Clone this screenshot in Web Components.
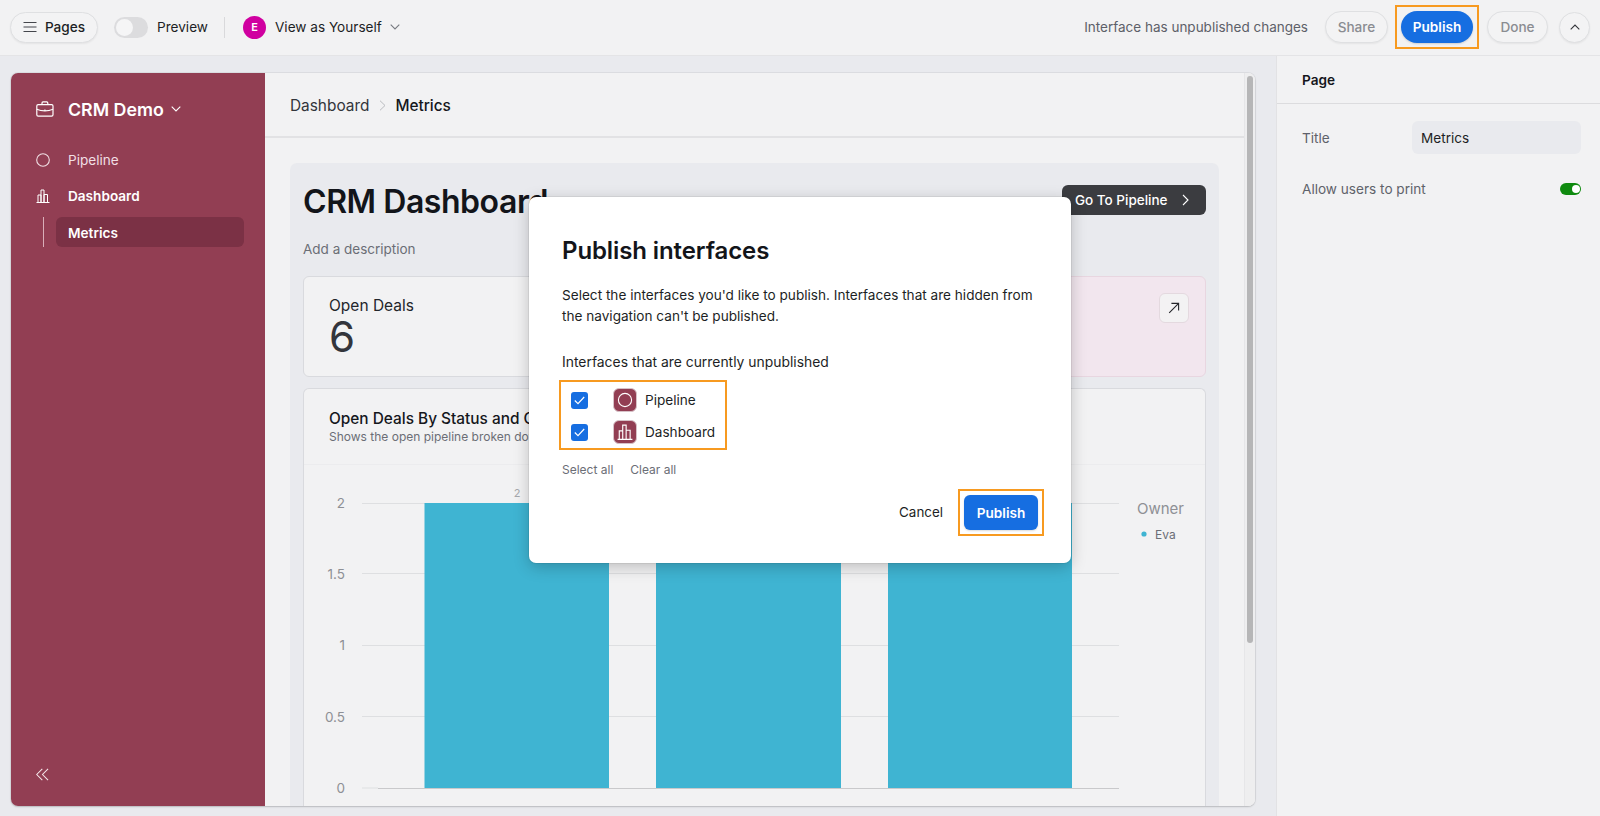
<!DOCTYPE html>
<html lang="en"><head><meta charset="utf-8"><title>CRM Demo</title>
<style>
html,body{margin:0;height:100%;overflow:hidden;background:#e9eaee;font-family:Inter,"Liberation Sans",sans-serif;color:#1d1f25;font-size:13.6px}
body{display:flex;flex-direction:column;height:816px;position:relative}
</style></head><body>
<crm-topbar></crm-topbar>
<crm-workspace></crm-workspace>
<publish-dialog></publish-dialog>
<script>
const define=(name,html)=>customElements.define(name,class extends HTMLElement{
  constructor(){super();this.attachShadow({mode:'open'}).innerHTML=html;}
});
const chevD=(w=10)=>`<svg width="${w}" height="6" viewBox="0 0 10 6" fill="none" stroke="currentColor" stroke-width="1.1"><path d="M.7.7 5 5 9.3.7"/></svg>`;

define('pill-button',`<style>
:host{display:inline-flex;align-items:center;justify-content:center;height:30px;box-sizing:border-box;border-radius:16px;border:1px solid #dfe0e2;background:#f3f3f4;color:#8a8c91;font-size:13.6px;font-weight:500;padding:0 12px;box-shadow:0 1px 2px rgba(0,0,0,.06)}
</style><slot></slot>`);

define('crm-topbar',`<style>
:host{display:flex;align-items:center;height:54px;padding:0 10px 1px 10px;flex:none;box-sizing:content-box;background:#f2f2f3;border-bottom:1px solid #e4e4e6;font-size:13.6px;color:#1d1f25}
.pages{width:88px;height:31px;color:#1d1f25;gap:8px;padding:0;margin-right:16px}
.pages svg{flex:none}
.toggle{width:34px;height:21px;border-radius:11px;background:#dcdcde;padding:2px;box-sizing:border-box;margin-right:9px}
.toggle i{display:block;width:17px;height:17px;border-radius:50%;background:#f5f5f6}
.div{width:1px;height:21px;background:#d9d9db;margin:0 18px 0 16px}
.avatar{width:23px;height:23px;border-radius:50%;background:#d000a0;color:#fff;font-size:11px;font-weight:600;display:flex;align-items:center;justify-content:center;margin-right:9px}
.caret{margin-left:8px;color:#777a80;display:flex}
.sp{flex:1}
.status{color:#5d6068;margin-right:17px;font-size:13.5px}
.hl{border:2px solid #f79a20;box-sizing:border-box;width:84px;height:44px;padding:0 4px;display:flex;align-items:center;margin:0 8px 0 7px}
.pub{flex:1;height:32px;border-radius:16px;background:#166ee1;color:#fff;font-weight:600;display:flex;align-items:center;justify-content:center;box-shadow:0 1px 2px rgba(0,0,0,.15)}
.up{width:31px;height:31px;padding:0;margin-left:11px;color:#33353a;border-radius:50%}
</style>
<pill-button class="pages"><svg width="14" height="12" viewBox="0 0 14 12" fill="none" stroke="#44464c" stroke-width="1.2"><path d="M.5 1.5h13M.5 6h13M.5 10.5h13"/></svg>Pages</pill-button>
<div class="toggle"><i></i></div><span>Preview</span><div class="div"></div>
<div class="avatar">E</div><span>View as Yourself</span><span class="caret">${chevD()}</span>
<div class="sp"></div>
<span class="status">Interface has unpublished changes</span>
<pill-button style="width:63px;height:32px;padding:0">Share</pill-button>
<div class="hl"><div class="pub">Publish</div></div>
<pill-button style="width:61px;height:32px;padding:0">Done</pill-button>
<pill-button class="up"><svg width="10" height="6" viewBox="0 0 10 6" fill="none" stroke="currentColor" stroke-width="1.1"><path d="M.7 5.3 5 1l4.3 4.3"/></svg></pill-button>`);

define('crm-workspace',`<style>
:host{display:flex;flex:1;min-height:0}
.left{flex:1;min-width:0;padding:17px 21px 10px 11px;display:flex}
crm-sidebar{flex:none}
.panel{flex:1;display:flex;border-radius:7px;overflow:hidden;box-shadow:0 0 0 1px rgba(0,0,0,.05),0 1px 2px rgba(0,0,0,.16)}
</style>
<div class="left"><div class="panel"><crm-sidebar></crm-sidebar><crm-page></crm-page></div></div>
<crm-props></crm-props>`);

define('crm-sidebar',`<style>
:host{display:flex;flex-direction:column;width:254px;background:#923e53;color:#fff;box-sizing:border-box;padding:19px 21px 0 25px;font-size:13.6px}
.brand{display:flex;align-items:center;height:34px;font-size:17.8px;font-weight:600;margin-bottom:19px}
.ico{width:32px;flex:none;display:flex}
.brand .car{margin-left:7px;display:flex}
.row{display:flex;align-items:center;height:30px;margin-bottom:6px;color:#f1dfe4}
.row.b{font-weight:600;color:#fff}
.sub{display:flex;align-items:stretch;height:30px}
.line{width:1px;background:#d9aeb9;margin:0 12px 0 7px}
.cur{flex:1;border-radius:6px;background:#7b3145;color:#fff;font-weight:600;display:flex;align-items:center;padding:1px 0 0 12px}
.sp{flex:1}
.col{height:38px;display:flex;color:#f6e8ec}
</style>
<div class="brand"><span class="ico"><svg width="18" height="16" viewBox="0 0 18 16" fill="none" stroke="#fff" stroke-width="1.2"><rect x=".8" y="3.6" width="16.2" height="11.6" rx="1.4"/><path d="M6 3.4V1.9c0-.6.4-1 1-1h3.8c.6 0 1 .4 1 1v1.5M.8 8.2c2.6 1.1 5.3 1.6 8.1 1.6s5.5-.5 8.1-1.6M8.9 8.6v1.8"/></svg></span>CRM Demo<span class="car">${chevD()}</span></div>
<div class="row"><span class="ico"><svg width="14" height="14" viewBox="0 0 14 14" fill="none" stroke="#f1dfe4" stroke-width="1.1"><circle cx="7" cy="7" r="6.3"/></svg></span>Pipeline</div>
<div class="row b"><span class="ico"><svg width="14" height="14" viewBox="0 0 14 14" fill="none" stroke="#fff" stroke-width="1"><path d="M.5 13.5h13M2 13.5V6h3v7.5M5 13.5V1h3v12.5M8 13.5V5.5h3.5v8"/></svg></span>Dashboard</div>
<div class="sub"><div class="line"></div><div class="cur">Metrics</div></div>
<div class="sp"></div>
<div class="col"><svg width="13" height="13" viewBox="0 0 14 14" fill="none" stroke="#f6e8ec" stroke-width="1.1"><path d="M6.8 1 .8 7l6 6M13 1 7 7l6 6"/></svg></div>`);

define('crm-page',`<style>
:host{display:flex;flex:1;min-width:0;flex-direction:column;background:#f2f2f3;position:relative}
header{height:61px;flex:none;padding-top:2px;border-bottom:2px solid #e2e2e4;display:flex;align-items:center;padding-left:25px;box-sizing:content-box;font-size:15.4px;color:#33353b}
header b{font-weight:500;color:#15171c}
header svg{margin:0 9px 0 10px}
.body{flex:1;display:flex;min-height:0}
.scroll{flex:1;min-width:0;padding:25px 25px 0 25px;display:flex}
.hold{position:absolute;right:0;top:0;bottom:0;width:11px;background:#eeeeef;border-left:1px solid #e6e6e8;box-sizing:border-box}
.thumb{position:absolute;left:2px;top:3px;width:6px;height:567px;border-radius:3px;background:#b6b6b7}
crm-dashboard{flex:1;min-width:0}
</style>
<div class="hold"><div class="thumb"></div></div>
<header><span>Dashboard</span><svg width="7" height="11" viewBox="0 0 7 11" fill="none" stroke="#b9bbbf" stroke-width="1"><path d="m1 .7 5 4.8-5 4.8"/></svg><b>Metrics</b></header>
<div class="body"><div class="scroll"><crm-dashboard></crm-dashboard></div><div style="width:11px"></div></div>`);

define('crm-dashboard',`<style>
:host{display:block;background:#e9eaee;border-radius:7px 7px 0 0;padding:22px 13px 0 13px;box-sizing:border-box;overflow:hidden}
.top{display:flex;align-items:flex-start;justify-content:space-between;height:30px}
h1{margin:2px 0 0;font-size:32px;font-weight:600;letter-spacing:-.45px;color:#13151a;line-height:30px}
.go{width:144px;height:30px;box-sizing:border-box;background:#3b3c40;color:#fff;border-radius:6px;display:flex;align-items:center;padding-left:13px;font-weight:500;font-size:13.5px;gap:14px}
.desc{margin:24px 0 17px;height:20px;line-height:20px;color:#6b6e76;font-size:13.5px}
.cards{display:grid;grid-template-columns:1fr 1fr;gap:11px;height:101px;margin-bottom:11px}
.card{border:1px solid #d9dade;border-radius:6px;background:#f2f2f3;box-sizing:border-box;padding:18px 25px}
.pink{background:#f2e6ee;border-color:#e8d6e0;display:flex;justify-content:flex-end;padding:16px 16px 0 0}
.ext{width:30px;height:30px;box-sizing:border-box;background:#f3f2f3;border:1px solid #e4d9df;border-radius:6px;display:flex;align-items:center;justify-content:center}
.lab{font-size:15.5px;line-height:22px;color:#23252b}
.num{font-size:42px;line-height:42px;color:#33353c;margin-top:-1px}
.chart{border:1px solid #d9dade;border-bottom:0;border-radius:6px 6px 0 0;background:#f2f2f3;height:420px;box-sizing:border-box}
.chead{height:76px;border-bottom:1px solid #ececee;padding:19px 25px 0;box-sizing:border-box}
.ct{font-size:15.4px;font-weight:500;line-height:21px;color:#15171c;white-space:nowrap}
.cs{font-size:12px;line-height:16px;color:#6b6e76;white-space:nowrap}
svg.c{display:block}
svg.c text{font-family:Inter,"Liberation Sans",sans-serif}
</style>
<div class="top"><h1>CRM Dashboard</h1><div class="go">Go To Pipeline<svg width="7" height="12" viewBox="0 0 7 12" fill="none" stroke="#fff" stroke-width="1.1"><path d="m1 1 5 5-5 5"/></svg></div></div>
<div class="desc">Add a description</div>
<div class="cards">
 <div class="card"><div class="lab">Open Deals</div><div class="num">6</div></div>
 <div class="card pink"><div class="ext"><svg width="12" height="12" viewBox="0 0 12 12" fill="none" stroke="#24262b" stroke-width="1.1"><path d="M1.2 10.8 10.6 1.4M3.4 1.4h7.2v7.2"/></svg></div></div>
</div>
<div class="chart">
 <div class="chead"><div class="ct">Open Deals By Status and Owner</div><div class="cs">Shows the open pipeline broken down</div></div>
 <svg class="c" width="901" height="342" viewBox="304 465 901 342">
  <g stroke="#dedfe1" stroke-width="1.2"><path d="M362 503.5H1119M362 573.5H1119M362 645.5H1119M362 716.5H1119M362 788H378"/></g>
  <path d="M378 788.5H1119" stroke="#c9c9cb" stroke-width="1.2"/>
  <g fill="#8e9095" font-size="13.5" text-anchor="end"><text x="345" y="508">2</text><text x="345" y="579">1.5</text><text x="345" y="650">1</text><text x="345" y="721.500">0.5</text><text x="345" y="793">0</text></g>
  <g fill="#3fb4d2"><rect x="424.500" y="503" width="184.500" height="285"/><rect x="656" y="503" width="185" height="285"/><rect x="888" y="503" width="184" height="285"/></g>
  <text x="517" y="497" font-size="11" fill="#a6a8ac" text-anchor="middle">2</text>
  <text x="1137" y="514" font-size="15" fill="#8e9095">Owner</text>
  <circle cx="1144" cy="534" r="2.600" fill="#3fb4d2"/><text x="1155" y="538.500" font-size="12" fill="#6b6e76">Eva</text>
 </svg>
</div>`);

define('crm-props',`<style>
:host{display:block;width:324px;flex:none;box-sizing:border-box;background:#f2f2f3;border-left:1px solid #e2e2e4;font-size:13.6px;color:#5f626a}
.h{height:47px;border-bottom:1px solid #dcdcde;display:flex;align-items:center;padding-left:25px;font-weight:600;color:#15171c}
.r{display:flex;align-items:center;justify-content:space-between;padding:0 19px 0 25px}
.inp{width:169px;height:33px;box-sizing:border-box;background:#e9eaee;border-radius:6px;padding-left:9px;display:flex;align-items:center;color:#1d1f25}
.tg{width:21px;height:12px;border-radius:6px;background:#0f8a0f;position:relative}
.tg i{position:absolute;right:1.500px;top:2px;width:8px;height:8px;border-radius:50%;background:#fff}
</style>
<div class="h">Page</div>
<div class="r" style="margin-top:17px"><span>Title</span><div class="inp">Metrics</div></div>
<div class="r" style="margin-top:25px;height:20px"><span>Allow users to print</span><div class="tg"><i></i></div></div>`);

define('publish-dialog',`<style>
:host{display:block;position:absolute;left:529px;top:197px;width:542px;height:366px;box-sizing:border-box;background:#fff;border-radius:7px;box-shadow:0 0 0 1px rgba(0,0,0,.06),0 4px 16px rgba(0,0,0,.22);padding:37px 33px 0;color:#1d1f25;font-size:13.6px}
h2{margin:0 0 17px;font-size:24px;line-height:34px;font-weight:600;color:#13151a;letter-spacing:-.1px}
p{margin:0 0 25px;line-height:21px;width:480px}
.sub{line-height:21px;color:#1d1f25;margin-bottom:7px;font-size:13.9px;font-weight:400}
.hl{width:168px;height:70px;box-sizing:border-box;border:2px solid #f79a20;margin-left:-3px;padding:2px 0 0 10px}
.it{display:flex;align-items:center;height:32px}
.cb{width:17px;height:17px;border-radius:3px;background:#166ee1;display:flex;align-items:center;justify-content:center;margin-right:25px;flex:none}
.ic{width:24px;height:24px;box-sizing:border-box;border-radius:6px;background:#923e53;border:1px solid #d7c2c8;display:flex;align-items:center;justify-content:center;margin-right:8px;flex:none}
.links{display:flex;gap:17px;font-size:12px;color:#6b6e76;line-height:16px;margin-top:12px}
.foot{display:flex;justify-content:flex-end;align-items:center;margin:11px -6px 0 0}
.foot .c{margin:0 15px 2px 0;font-size:13.4px}
.ph{border:2px solid #f79a20;box-sizing:border-box;width:86px;height:47px;padding:4px;display:flex}
.pb{flex:1;background:#166ee1;color:#fff;font-weight:600;border-radius:6px;display:flex;align-items:center;justify-content:center;box-shadow:0 1px 2px rgba(0,0,0,.15)}
</style>
<h2>Publish interfaces</h2>
<p>Select the interfaces you'd like to publish. Interfaces that are hidden from the navigation can't be published.</p>
<div class="sub">Interfaces that are currently unpublished</div>
<div class="hl">
 <div class="it"><span class="cb"><svg width="11" height="9" viewBox="0 0 11 9" fill="none" stroke="#fff" stroke-width="1.2"><path d="m.8 4.500 3.200 3.200L10.200 1"/></svg></span><span class="ic"><svg width="16" height="16" viewBox="0 0 16 16" fill="none" stroke="#fff" stroke-width="1.1"><circle cx="8" cy="8" r="6.600"/></svg></span>Pipeline</div>
 <div class="it"><span class="cb"><svg width="11" height="9" viewBox="0 0 11 9" fill="none" stroke="#fff" stroke-width="1.2"><path d="m.8 4.500 3.200 3.200L10.200 1"/></svg></span><span class="ic"><svg width="16" height="16" viewBox="0 0 14 14" fill="none" stroke="#fff" stroke-width="1"><path d="M.5 13.500h13M2 13.500V6h3v7.500M5 13.500V1h3v12.500M8 13.500V5.500h3.500v8"/></svg></span>Dashboard</div>
</div>
<div class="links"><span>Select all</span><span>Clear all</span></div>
<div class="foot"><span class="c">Cancel</span><div class="ph"><div class="pb">Publish</div></div></div>`);
</script>
</body></html>
